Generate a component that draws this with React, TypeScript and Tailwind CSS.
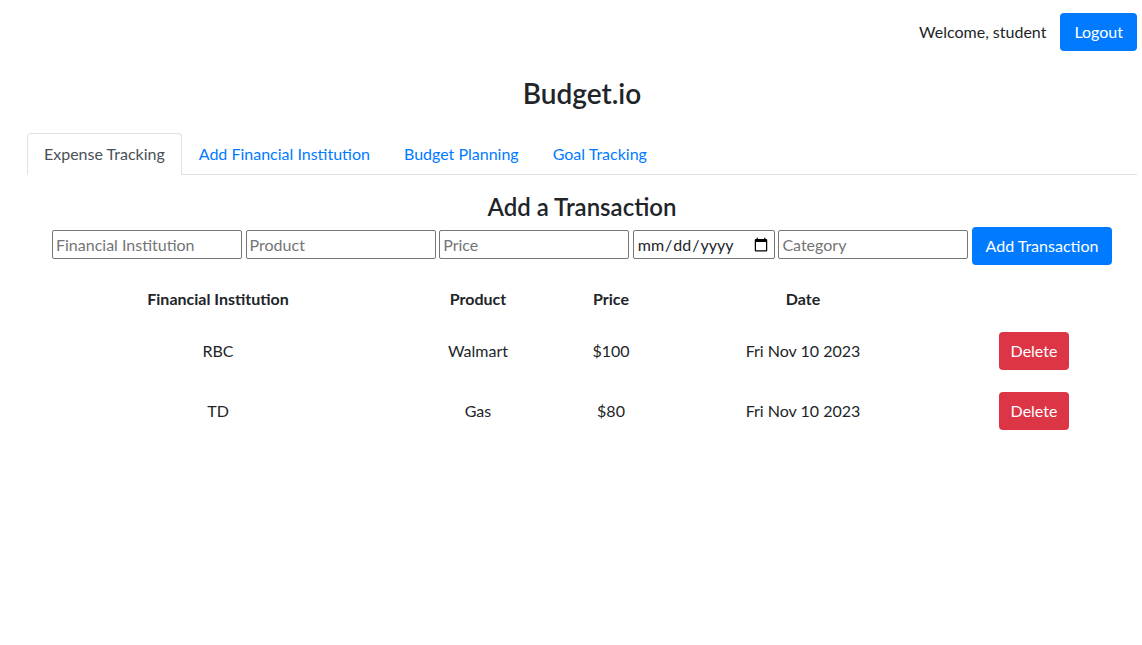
import React from 'react';

type Row = {
	institution: string;
	product: string;
	price: string;
	date: string;
};

const rows: Row[] = [
	{ institution: 'RBC', product: 'Walmart', price: '$100', date: 'Fri Nov 10 2023' },
	{ institution: 'TD', product: 'Gas', price: '$80', date: 'Fri Nov 10 2023' },
];

const tabs = ['Expense Tracking', 'Add Financial Institution', 'Budget Planning', 'Goal Tracking'];

const cols = 'grid grid-cols-[332px_188px_78px_306px_156px] w-[1060px] mx-auto text-center';
const field = 'mt-[3px] w-[190px] h-[29px] px-[3px] border border-[#767676] rounded-[2px] placeholder:text-[#757575] outline-none';

export default function App() {
	return (
		<div className="min-h-screen bg-white pl-[27px] pr-[5px] text-[16px] leading-[1.5] text-[#212529] font-['Lato','Noto_Sans',sans-serif]">
			{/* top bar */}
			<div className="flex justify-end items-center gap-[14px] pt-[13px]">
				<span>Welcome, student</span>
				<button className="h-[38px] px-[14px] rounded-[4px] bg-[#007bff] text-white">Logout</button>
			</div>

			<h3 className="mt-[26px] text-center text-[28px] leading-[1.2] font-semibold">Budget.io</h3>

			{/* tabs */}
			<ul className="mt-[22px] flex border-b border-[#dee2e6]">
				{tabs.map((t, i) => (
					<li key={t} className="-mb-px">
						<a
							href="#"
							className={
								i === 0
									? 'block px-4 py-2 border border-[#dee2e6] border-b-white rounded-t-[4px] bg-white text-[#495057]'
									: 'block px-4 py-2 border border-transparent text-[#007bff]'
							}
						>
							{t}
						</a>
					</li>
				))}
			</ul>

			<h4 className="mt-[18px] text-center text-[24px] leading-[1.2] font-semibold">Add a Transaction</h4>

			{/* form */}
			<div className="mt-[6px] w-[1060px] mx-auto flex items-start justify-between">
				<input className={field} placeholder="Financial Institution" />
				<input className={field} placeholder="Product" />
				<input className={field} placeholder="Price" />
				<input type="date" className="mt-[3px] w-[142px] h-[29px] px-[3px] border border-[#767676] rounded-[2px] outline-none" />
				<input className={field} placeholder="Category" />
				<button className="w-[140px] h-[38px] rounded-[4px] bg-[#007bff] text-white">Add Transaction</button>
			</div>

			{/* table */}
			<div className="mt-[11px]">
				<div className={`${cols} h-[45px] items-center font-bold`}>
					<div>Financial Institution</div>
					<div>Product</div>
					<div>Price</div>
					<div>Date</div>
					<div></div>
				</div>
				{rows.map((r) => (
					<div key={r.institution} className={`${cols} h-[60px] items-center`}>
						<div>{r.institution}</div>
						<div>{r.product}</div>
						<div>{r.price}</div>
						<div>{r.date}</div>
						<div>
							<button className="h-[38px] px-3 rounded-[4px] bg-[#dc3545] text-white">Delete</button>
						</div>
					</div>
				))}
			</div>
		</div>
	);
}
